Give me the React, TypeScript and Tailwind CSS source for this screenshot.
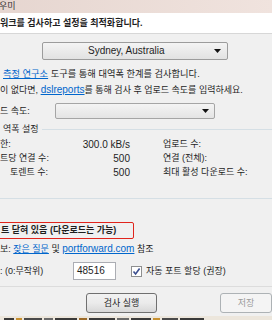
import type { ReactNode } from 'react'

function Link({ children }: { children: ReactNode }) {
  return <span className="text-[#0066cc] underline underline-offset-1">{children}</span>
}

function Button({ children, disabled }: { children: ReactNode; disabled?: boolean }) {
  return (
    <div
      className={
        disabled
          ? 'flex h-[20px] items-center justify-center rounded-[3px] border border-[#adb2b5] bg-[#f4f4f4] text-[#9a9a9a]'
          : 'flex h-[20px] items-center justify-center rounded-[3px] border border-[#707070] bg-gradient-to-b from-[#f2f2f2] via-[#ebebeb] to-[#d8d8d8] text-[#1e1e1e]'
      }
    >
      {children}
    </div>
  )
}

function Caret() {
  return (
    <svg width="7" height="4" viewBox="0 0 7 4">
      <path d="M0 0h7L3.5 4z" fill="#111" />
    </svg>
  )
}

export default function App() {
  return (
    <div className="relative h-[320px] w-[272px] overflow-hidden bg-[#f0f0f0] font-['Liberation_Sans','Noto_Sans_CJK_KR',sans-serif] text-[9px] leading-none text-[#1e1e1e]">
      {/* title bar */}
      <div className="flex h-[13px] items-center bg-gradient-to-r from-[#e6d6d0] to-[#f0e3de] text-[#333]">
        <span className="-ml-[1px]">우미</span>
      </div>

      {/* header */}
      <div className="flex h-[21px] items-center border-b border-[#d7d7d7] bg-white font-bold">
        <span>워크를 검사하고 설정을 최적화합니다.</span>
      </div>

      {/* server */}
      <div className="mt-[8px] pl-[42px]">
        <div className="flex h-[18px] w-[186px] items-center justify-between rounded-[2px] border border-[#9c9c9c] bg-gradient-to-b from-[#f4f4f4] to-[#e2e2e2] pl-[45px] pr-[6px] text-[10px]">
          <span>Sydney, Australia</span>
          <Caret />
        </div>
      </div>

      <div className="mt-[10px] pl-[3px] text-[9.25px]">
        <Link>측정 연구소</Link> 도구를 통해 대역폭 한계를 검사합니다.
      </div>
      <div className="mt-[6px]">
        이 없다면, <Link><span className="text-[10px]">dslreports</span></Link>를 통해 검사 후 업로드 속도를 입력하세요.
      </div>

      {/* upload speed */}
      <div className="mt-[8px] flex items-center">
        <span className="w-[55px]">드 속도:</span>
        <div className="flex h-[16px] w-[160px] items-center justify-end rounded-[2px] border border-[#a5a5a5] bg-gradient-to-b from-[#f4f4f4] to-[#e4e4e4] pr-[5px]">
          <Caret />
        </div>
      </div>

      {/* bandwidth group */}
      <div className="mt-[6px] flex items-center">
        <span className="pl-[3px] pr-[3px]">역폭 설정</span>
        <div className="h-px flex-1 bg-[#d5dfe5]" />
      </div>
      <div className="flex flex-col gap-[5px] pt-[6px]">
        <div className="flex h-[9px] items-center">
          <span className="w-[80px]">한:</span>
          <span className="w-[50px] text-right text-[10px]">300.0 kB/s</span>
          <span className="pl-[33px]">업로드 수:</span>
        </div>
        <div className="flex h-[9px] items-center">
          <span className="w-[80px]">트당 연결 수:</span>
          <span className="w-[50px] text-right text-[10px]">500</span>
          <span className="pl-[33px]">연결 (전체):</span>
        </div>
        <div className="flex h-[9px] items-center">
          <span className="w-[80px] pl-[10px]">토렌트 수:</span>
          <span className="w-[50px] text-right text-[10px]">500</span>
          <span className="pl-[33px]">최대 활성 다운로드 수:</span>
        </div>
      </div>
      <div className="mt-[21px] h-px bg-[#d5dfe5]" />

      {/* port status */}
      <div className="mt-[23px] -ml-[4px] flex h-[17px] w-[138px] items-center rounded-[2px] border border-[#e0241c] pl-[4px] font-bold">
        트 닫혀 있음 (다운로드는 가능)
      </div>
      <div className="mt-[5px]">
        보: <Link>잦은 질문</Link> 및 <Link><span className="text-[10px]">portforward.com</span></Link> 참조
      </div>

      <div className="mt-[8px] flex items-center">
        <span className="w-[73px]">: (0:무작위)</span>
        <div className="flex h-[18px] w-[43px] items-center border border-[#abadb3] bg-white pl-[3px] text-[10px]">48516</div>
        <div className="ml-[15px] flex items-center gap-[4px]">
          <div className="flex h-[11px] w-[11px] items-center justify-center border border-[#8e8f8f] bg-white">
            <svg width="9" height="9" viewBox="0 0 9 9">
              <path d="M1.5 4.5 3.6 7 7.6 1.5" fill="none" stroke="#3c4f8f" strokeWidth="1.6" />
            </svg>
          </div>
          <span>자동 포트 할당 (권장)</span>
        </div>
      </div>

      <div className="mt-[6px] h-px bg-[#dcdcdc]" />

      {/* actions */}
      <div className="mt-[6px] flex items-center">
        <div className="ml-[86px] w-[84px]">
          <Button>검사 실행</Button>
        </div>
        <div className="ml-[63px] w-[52px] shrink-0">
          <Button disabled>저장</Button>
        </div>
      </div>

      {/* bottom strip */}
      <div className="absolute bottom-0 left-0 flex h-[4px] w-full items-end gap-[2px] bg-[#ece6dc] px-[4px]">
        <span className="h-[2px] w-[10px] bg-[#3a3a3a]" />
        <span className="h-[2px] w-[6px] bg-[#c7902f]" />
        <span className="h-[2px] w-[18px] bg-[#4a4a4a]" />
        <span className="h-[2px] w-[9px] bg-[#6a6a6a]" />
        <span className="h-[2px] w-[22px] bg-[#3a3a3a]" />
        <span className="h-[2px] w-[8px] bg-[#9c6b2a]" />
        <span className="h-[2px] w-[26px] bg-[#3a3a3a]" />
        <span className="h-[2px] w-[12px] bg-[#6a6a6a]" />
        <span className="h-[2px] w-[20px] bg-[#3a3a3a]" />
        <span className="h-[2px] w-[7px] bg-[#c7902f]" />
        <span className="h-[2px] w-[16px] bg-[#4a4a4a]" />
        <span className="h-[2px] w-[24px] bg-[#3a3a3a]" />
      </div>
    </div>
  )
}
